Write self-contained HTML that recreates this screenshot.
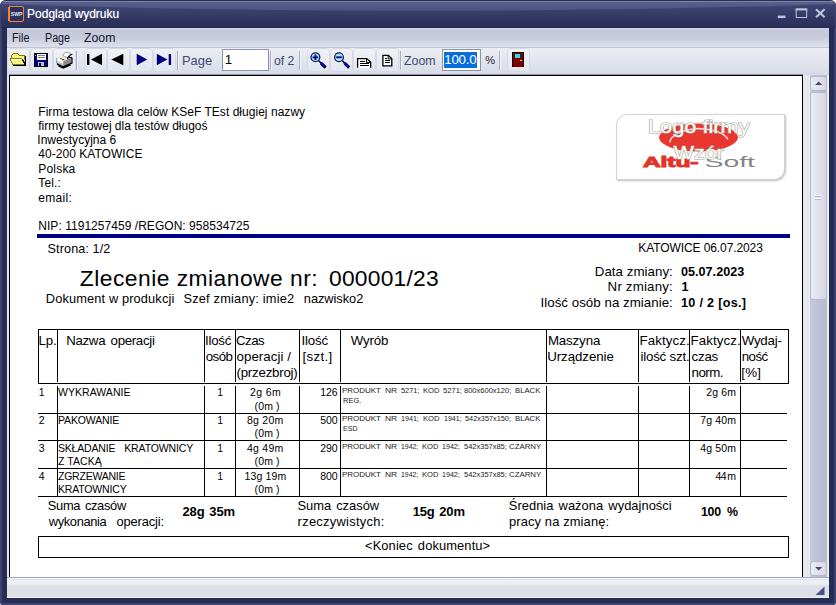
<!DOCTYPE html>
<html lang="pl"><head><meta charset="utf-8"><title>Podgląd wydruku</title>
<style>
html,body{margin:0;padding:0;background:#fff;}
body{width:836px;height:605px;position:relative;overflow:hidden;font-family:"Liberation Sans",sans-serif;}
.a{position:absolute;}
.t{position:absolute;white-space:pre;font-family:"Liberation Sans",sans-serif;}
#win{left:0;top:0;width:836px;height:605px;background:#262c53;border-radius:6px 6px 3px 3px;box-shadow:inset 0 0 0 2px #3c436f;}
#title{left:1px;top:0;width:834px;height:28px;border-radius:6px 6px 0 0;overflow:hidden;
 background:linear-gradient(#2a2f56 0px,#2a2f56 1px,#3d4471 1px,#3a416e 10px,#30355f 20px,#2b3058 27px,#242950 27px,#242950 28px);}
#menu{left:7px;top:28px;width:822px;height:20px;
 background:linear-gradient(#d8dbe7 0px,#c6c9da 2px,#c6c9da 9px,#dddfe9 18px,#dddfe9 19px,#c2c5d7 19px,#c2c5d7 20px);}
#tool{left:7px;top:48px;width:822px;height:27px;background:linear-gradient(#eceef2 0px,#d8dbe7 27px);}
.btn{position:absolute;top:49px;width:21px;height:22px;border-radius:4px;background:linear-gradient(#f1f2f6,#e4e6ee);box-shadow:0 0 0 1px #d6d9e6;}
.sep{position:absolute;top:51px;width:1px;height:19px;background:#a9adc6;box-shadow:1px 0 0 #f2f3f7;}
.inp{position:absolute;background:#fff;border:1px solid #8b93b6;box-sizing:border-box;}
#prev{left:7px;top:75px;width:822px;height:502px;background:#e7e9ef;}
#page{left:9px;top:75px;width:794px;height:502px;background:#fff;border:1px solid #000;border-bottom:none;box-sizing:border-box;}
#track{left:810px;top:75px;width:17px;height:502px;background:linear-gradient(90deg,#c6c9dc,#b6bad1);}
.sbtn{position:absolute;left:810px;width:17px;height:15px;border-radius:3px;background:linear-gradient(90deg,#eceef3,#d3d6e3);box-shadow:inset 0 0 0 1px #b4b8cf;}
#status{left:7px;top:577px;width:822px;height:21px;background:linear-gradient(#a3a7c2 0px,#a3a7c2 1px,#f8f8fb 1px,#f8f8fb 2px,#dfe1ee 2px,#dfe1ee 3px,#f0f1f6 3px,#eceef3 7px,#dfe1ea 9px,#dcdfe8 20px,#f0f1f5 20px,#f0f1f5 21px);}
.l{position:absolute;background:#000;}
</style></head><body>
<div id="win" class="a"></div>
<div id="title" class="a"><svg class="a" style="left:0;top:0" width="834" height="28" viewBox="1 0 834 28"><defs><linearGradient id="tg" x1="0" y1="0" x2="0" y2="1"><stop offset="0" stop-color="#5a628e"/><stop offset="1" stop-color="#4a5281"/></linearGradient></defs>
<path d="M0 1 H836 V4.3 Q418 17.4 0 4.3 Z" fill="url(#tg)"/><rect x="0" y="1" width="836" height="1" fill="#7c83a9"/></svg></div>
<!-- app icon -->
<svg class="a" style="left:8px;top:6px" width="16" height="16" viewBox="0 0 16 16"><rect x="0.5" y="0.5" width="15" height="15" rx="1.5" fill="#2c3260" stroke="#f58233" stroke-width="1"/><rect x="0" y="1" width="2" height="14" fill="#f58233"/><text x="8.6" y="10.3" text-anchor="middle" font-family="'Liberation Sans',sans-serif" font-weight="bold" font-size="4.6" fill="#e8e9f4" textLength="11.5" lengthAdjust="spacingAndGlyphs">SWP</text></svg>
<!-- caption buttons -->
<svg class="a" style="left:774px;top:5px" width="56" height="18" viewBox="0 0 56 18"><g fill="none" stroke="#bfc3dc">
<path d="M3.8 11.8 H11.4" stroke-width="2.5"/>
<rect x="22.2" y="4.2" width="10.5" height="8.3" stroke-width="1"/><path d="M21.7 4.4 H33.2" stroke-width="2"/>
<path d="M42 4.2 L50.6 12.3 M50.6 4.2 L42 12.3" stroke-width="2.1"/></g></svg>
<div id="menu" class="a"></div>
<div id="tool" class="a"></div>
<div class="btn" style="left:8px"></div><div class="btn" style="left:31px"></div><div class="btn" style="left:54px"></div>
<div class="sep" style="left:76px"></div>
<div class="btn" style="left:85px"></div><div class="btn" style="left:108px"></div><div class="btn" style="left:131px"></div><div class="btn" style="left:154px"></div>
<div class="sep" style="left:177px"></div>
<div class="inp" style="left:222px;top:49px;width:47px;height:22px"></div>
<div class="sep" style="left:270px"></div>
<div class="sep" style="left:299px"></div>
<div class="btn" style="left:308px"></div><div class="btn" style="left:331px"></div><div class="btn" style="left:354px"></div><div class="btn" style="left:377px"></div>
<div class="sep" style="left:400px"></div>
<div class="inp" style="left:442px;top:49px;width:39px;height:22px"></div>
<div class="a" style="left:444px;top:52px;width:33px;height:16px;background:#0a6ddd"></div>
<div class="sep" style="left:499px"></div>
<div class="btn" style="left:508px"></div>
<!-- folder -->
<svg class="a" style="left:10px;top:53px" width="16" height="13" viewBox="0 0 16 13" shape-rendering="crispEdges">
<rect x="3" y="0" width="5" height="1" fill="#808000"/>
<rect x="2" y="1" width="1" height="1" fill="#808000"/>
<rect x="3" y="1" width="5" height="1" fill="#ffff00"/>
<rect x="4" y="1" width="1" height="1" fill="#f4f4ff"/>
<rect x="6" y="1" width="1" height="1" fill="#f4f4ff"/>
<rect x="8" y="1" width="1" height="1" fill="#808000"/>
<rect x="1" y="2" width="1" height="1" fill="#808000"/>
<rect x="2" y="2" width="7" height="1" fill="#ffff00"/>
<rect x="3" y="2" width="1" height="1" fill="#f4f4ff"/>
<rect x="5" y="2" width="1" height="1" fill="#f4f4ff"/>
<rect x="7" y="2" width="1" height="1" fill="#f4f4ff"/>
<rect x="9" y="2" width="6" height="1" fill="#808000"/>
<rect x="1" y="3" width="1" height="1" fill="#808000"/>
<rect x="2" y="3" width="12" height="1" fill="#ffff00"/>
<rect x="2" y="3" width="1" height="1" fill="#f4f4ff"/>
<rect x="4" y="3" width="1" height="1" fill="#f4f4ff"/>
<rect x="6" y="3" width="1" height="1" fill="#f4f4ff"/>
<rect x="8" y="3" width="1" height="1" fill="#f4f4ff"/>
<rect x="10" y="3" width="1" height="1" fill="#f4f4ff"/>
<rect x="12" y="3" width="1" height="1" fill="#f4f4ff"/>
<rect x="14" y="3" width="1" height="1" fill="#808000"/>
<rect x="15" y="3" width="1" height="1" fill="#000"/>
<rect x="1" y="4" width="1" height="1" fill="#808000"/>
<rect x="2" y="4" width="12" height="1" fill="#ffff00"/>
<rect x="3" y="4" width="1" height="1" fill="#f4f4ff"/>
<rect x="5" y="4" width="1" height="1" fill="#f4f4ff"/>
<rect x="7" y="4" width="1" height="1" fill="#f4f4ff"/>
<rect x="9" y="4" width="1" height="1" fill="#f4f4ff"/>
<rect x="11" y="4" width="1" height="1" fill="#f4f4ff"/>
<rect x="13" y="4" width="1" height="1" fill="#f4f4ff"/>
<rect x="14" y="4" width="1" height="1" fill="#808000"/>
<rect x="15" y="4" width="1" height="1" fill="#000"/>
<rect x="0" y="5" width="12" height="1" fill="#808000"/>
<rect x="12" y="5" width="2" height="1" fill="#ffff00"/>
<rect x="12" y="5" width="1" height="1" fill="#f4f4ff"/>
<rect x="14" y="5" width="1" height="1" fill="#808000"/>
<rect x="15" y="5" width="1" height="1" fill="#000"/>
<rect x="0" y="6" width="1" height="1" fill="#808000"/>
<rect x="1" y="6" width="11" height="1" fill="#fff"/>
<rect x="12" y="6" width="1" height="1" fill="#000"/>
<rect x="13" y="6" width="1" height="1" fill="#ffff00"/>
<rect x="13" y="6" width="1" height="1" fill="#f4f4ff"/>
<rect x="14" y="6" width="1" height="1" fill="#808000"/>
<rect x="15" y="6" width="1" height="1" fill="#000"/>
<rect x="0" y="7" width="1" height="1" fill="#808000"/>
<rect x="1" y="7" width="11" height="1" fill="#ffff00"/>
<rect x="2" y="7" width="1" height="1" fill="#f4f4ff"/>
<rect x="4" y="7" width="1" height="1" fill="#f4f4ff"/>
<rect x="6" y="7" width="1" height="1" fill="#f4f4ff"/>
<rect x="8" y="7" width="1" height="1" fill="#f4f4ff"/>
<rect x="10" y="7" width="1" height="1" fill="#f4f4ff"/>
<rect x="12" y="7" width="2" height="1" fill="#000"/>
<rect x="14" y="7" width="1" height="1" fill="#ffff00"/>
<rect x="14" y="7" width="1" height="1" fill="#f4f4ff"/>
<rect x="15" y="7" width="1" height="1" fill="#000"/>
<rect x="1" y="8" width="1" height="1" fill="#808000"/>
<rect x="2" y="8" width="11" height="1" fill="#ffff00"/>
<rect x="3" y="8" width="1" height="1" fill="#f4f4ff"/>
<rect x="5" y="8" width="1" height="1" fill="#f4f4ff"/>
<rect x="7" y="8" width="1" height="1" fill="#f4f4ff"/>
<rect x="9" y="8" width="1" height="1" fill="#f4f4ff"/>
<rect x="11" y="8" width="1" height="1" fill="#f4f4ff"/>
<rect x="13" y="8" width="1" height="1" fill="#000"/>
<rect x="14" y="8" width="1" height="1" fill="#808000"/>
<rect x="15" y="8" width="1" height="1" fill="#000"/>
<rect x="1" y="9" width="1" height="1" fill="#808000"/>
<rect x="2" y="9" width="11" height="1" fill="#ffff00"/>
<rect x="2" y="9" width="1" height="1" fill="#f4f4ff"/>
<rect x="4" y="9" width="1" height="1" fill="#f4f4ff"/>
<rect x="6" y="9" width="1" height="1" fill="#f4f4ff"/>
<rect x="8" y="9" width="1" height="1" fill="#f4f4ff"/>
<rect x="10" y="9" width="1" height="1" fill="#f4f4ff"/>
<rect x="12" y="9" width="1" height="1" fill="#f4f4ff"/>
<rect x="13" y="9" width="3" height="1" fill="#000"/>
<rect x="2" y="10" width="1" height="1" fill="#808000"/>
<rect x="3" y="10" width="11" height="1" fill="#ffff00"/>
<rect x="3" y="10" width="1" height="1" fill="#f4f4ff"/>
<rect x="5" y="10" width="1" height="1" fill="#f4f4ff"/>
<rect x="7" y="10" width="1" height="1" fill="#f4f4ff"/>
<rect x="9" y="10" width="1" height="1" fill="#f4f4ff"/>
<rect x="11" y="10" width="1" height="1" fill="#f4f4ff"/>
<rect x="13" y="10" width="1" height="1" fill="#f4f4ff"/>
<rect x="14" y="10" width="2" height="1" fill="#000"/>
<rect x="2" y="11" width="12" height="1" fill="#808000"/>
<rect x="14" y="11" width="2" height="1" fill="#000"/>
<rect x="3" y="12" width="13" height="1" fill="#000"/>
</svg>
<!-- floppy -->
<svg class="a" style="left:34px;top:53px" width="14" height="14" viewBox="0 0 14 14" shape-rendering="crispEdges">
<rect width="14" height="14" fill="#000"/><rect x="1" y="1" width="12" height="12" fill="#000080"/>
<rect x="3" y="1" width="9" height="6" fill="#fff"/><rect x="4" y="2" width="7" height="1" fill="#808080"/><rect x="4" y="4" width="7" height="1" fill="#808080"/>
<rect x="4" y="9" width="6" height="4" fill="#c0c0c0"/><rect x="5" y="10" width="2" height="3" fill="#000080"/><rect x="1" y="2" width="1" height="1" fill="#c0c0c0"/>
</svg>
<!-- printer -->
<svg class="a" style="left:55px;top:51px" width="19" height="18" viewBox="55 51 19 18">
<path d="M56.6 58.3 L62.6 55.3 L67.6 57.6 L71.6 58 L71.6 63 L63.2 67 L56.6 63.6 Z" fill="#e9e9e9"/>
<path d="M63.2 61.2 L71.6 58 V63.2 L63.2 67 Z" fill="#8a8a8a"/>
<path d="M56.6 60.5 L63.2 63.4 V67 L56.6 63.6 Z" fill="#c4c4c4"/>
<path d="M56.6 58.3 L63.2 61.2 V63.4 L56.6 60.5 Z" fill="#fbfbfb"/>
<path d="M56.6 58.2 V63.4" stroke="#9a9a9a" stroke-width=".9" fill="none"/>
<path d="M62.7 55.6 L65 52.2 L68.3 52.4 L71.6 54.4 L67.6 57.9 Z" fill="#fff" stroke="#8c8c8c" stroke-width=".8"/>
<path d="M72.3 54.3 L70.6 54.7 L67.7 57.6 L67.9 59.4" fill="none" stroke="#000" stroke-width="1.2"/>
<path d="M68.6 57.4 L71.6 57.6 L72 58.5 V63.4" fill="none" stroke="#000" stroke-width="1.2"/>
<path d="M56.9 63.8 L63.2 66.9 L71.9 63.2 M58.2 65.6 L63.2 68 L70.6 64.8" fill="none" stroke="#000" stroke-width="1.3"/>
<rect x="59.8" y="58" width="2.4" height="1.3" rx=".5" fill="#00e000"/><rect x="62" y="59" width="2.4" height="1.3" rx=".5" fill="#ff0000"/>
</svg>
<!-- nav -->
<svg class="a" style="left:85px;top:50px" width="91" height="20" viewBox="85 50 91 20">
<rect x="87" y="54" width="2.4" height="11" fill="#000"/><path d="M91 59.5 L102 53.8 V65.2 Z" fill="#000"/>
<path d="M111.4 59.5 L123.3 53.8 V65.2 Z" fill="#000"/>
<path d="M136.7 53.8 L147.3 59.5 L136.7 65.2 Z" fill="#000080"/>
<path d="M156.8 53.8 L167.4 59.5 L156.8 65.2 Z" fill="#000080"/><rect x="168.7" y="54" width="2.4" height="11" fill="#000080"/>
</svg>
<!-- zoom in / out / pages -->
<svg class="a" style="left:308px;top:50px" width="92" height="20" viewBox="308 50 92 20">
<g><path d="M318.8 60.8 L321 63" stroke="#000" stroke-width="1.6"/><path d="M321.2 63.4 L325.6 67.6" stroke="#000" stroke-width="3"/><path d="M320.6 62.6 L324.8 66.6" stroke="#0000d8" stroke-width="2.4"/>
<circle cx="315.4" cy="57.3" r="4.4" fill="#9eeaf0" stroke="#151560" stroke-width="1.3"/></g>
<path d="M312.6 57.3 H318.2 M315.4 54.5 V60.1" stroke="#00008a" stroke-width="1.8"/>
<g transform="translate(23.6 0)"><path d="M318.8 60.8 L321 63" stroke="#000" stroke-width="1.6"/><path d="M321.2 63.4 L325.6 67.6" stroke="#000" stroke-width="3"/><path d="M320.6 62.6 L324.8 66.6" stroke="#0000d8" stroke-width="2.4"/>
<circle cx="315.4" cy="57.3" r="4.4" fill="#9eeaf0" stroke="#151560" stroke-width="1.3"/></g>
<path d="M336.2 57.3 H341.8" stroke="#00008a" stroke-width="1.8"/>
<path d="M357.6 67.8 V58.6 H366.8 L370.7 62.2 V67.8" fill="#fff" stroke="#000" stroke-width="1.3"/>
<path d="M366.5 58.8 V62.4 H370.5" fill="none" stroke="#000" stroke-width="1"/>
<path d="M360 61.5 H365 M360 63.5 H369 M360 65.5 H369" stroke="#000" stroke-width="1" shape-rendering="crispEdges"/>
<path d="M382.9 55.3 H388.4 L391.8 58.7 V65.8 H382.9 Z" fill="#fff" stroke="#000" stroke-width="1.3"/>
<path d="M388.2 55.5 V58.9 H391.6" fill="none" stroke="#000" stroke-width="1"/>
<path d="M385 58.5 H387 M385 60.5 H390 M385 62.5 H390" stroke="#000" stroke-width="1" shape-rendering="crispEdges"/>
</svg>
<!-- door -->
<svg class="a" style="left:511px;top:51px" width="14" height="17" viewBox="511 51 14 17" shape-rendering="crispEdges">
<rect x="511.7" y="51.8" width="11.8" height="15.5" fill="#000"/><rect x="512.7" y="52.8" width="9.8" height="13.8" fill="#800000"/>
<rect x="514.8" y="54.4" width="5.6" height="3.2" fill="#1ee6e6"/><rect x="520.3" y="59.7" width="1.3" height="1.3" fill="#ffd800"/>
</svg>

<div id="prev" class="a"></div>
<div class="a" style="left:9px;top:74px;width:794px;height:1px;background:#9093b0"></div>
<div id="page" class="a"></div>
<div id="track" class="a"></div>
<div class="sbtn" style="top:76px"></div>
<div class="sbtn" style="top:92px;height:208px"></div>
<div class="sbtn" style="top:561px"></div>
<svg class="a" style="left:810px;top:76px" width="17" height="15"><path d="M5.2 9 L8.7 5.6 L12.2 9 Z" fill="#3f4676"/></svg>
<svg class="a" style="left:810px;top:561px" width="17" height="15"><path d="M5.2 6 L8.7 9.4 L12.2 6 Z" fill="#3f4676"/></svg>
<svg class="a" style="left:814px;top:194px" width="8" height="6"><path d="M1 1.5H7M1 4.5H7" stroke="#f8f8fb" stroke-width="1"/><path d="M1 2.5H7M1 5.5H7" stroke="#a0a5c0" stroke-width="1" opacity=".6"/></svg>
<div class="a" style="left:827px;top:75px;width:2px;height:502px;background:#eef0f4"></div>
<div id="status" class="a"></div>
<svg class="a" style="left:814px;top:586px" width="12" height="10"><path d="M10.5 0.5 V9 H1.5 Z" fill="#4b5283"/></svg>

<!-- ============ document ============ -->
<div class="a" style="left:37px;top:234px;width:753px;height:4px;background:#000080"></div>
<div class="a" style="left:616px;top:114px;width:169px;height:66px;box-sizing:border-box;background:#fff;border:1px solid #d4d4d4;border-radius:11px 0 11px 0;box-shadow:1px 1px 2px rgba(0,0,0,.25)"></div>
<svg class="a" style="left:616px;top:114px" width="170" height="67" viewBox="616 114 170 67">
<ellipse cx="698.5" cy="137.5" rx="39.5" ry="14" fill="#e7372e"/>
<path d="M669.5 142.5 Q672 131 698 128.5 Q723 130 728 139.5" fill="none" stroke="#fde4e0" stroke-width="1.3"/>
<text x="643" y="167.2" font-family="'Liberation Sans',sans-serif" font-weight="bold" font-size="14" fill="#e0352c" stroke="#e0352c" stroke-width="1" textLength="55.5" lengthAdjust="spacingAndGlyphs">Altu-</text>
<text x="704.5" y="167.2" font-family="'Liberation Sans',sans-serif" font-size="14" fill="#848484" textLength="50.5" lengthAdjust="spacingAndGlyphs">Soft</text>
<g font-family="'Liberation Sans',sans-serif" font-size="19" fill="#fffdf0" stroke="#a3a8b0" stroke-width="1.2" paint-order="stroke">
<text x="648" y="133" textLength="101.5" lengthAdjust="spacingAndGlyphs">Logo firmy</text>
<text x="673.8" y="158.7" textLength="50" lengthAdjust="spacingAndGlyphs">Wzór</text></g>
</svg>

<div class="l" style="left:38px;top:329px;width:751px;height:1px"></div>
<div class="l" style="left:38px;top:383px;width:751px;height:1px"></div>
<div class="l" style="left:38px;top:329px;width:1px;height:55px"></div>
<div class="l" style="left:788px;top:329px;width:1px;height:55px"></div>
<div class="l" style="left:57px;top:329px;width:1px;height:53px"></div>
<div class="l" style="left:57px;top:386px;width:1px;height:111px"></div>
<div class="l" style="left:204px;top:329px;width:1px;height:53px"></div>
<div class="l" style="left:204px;top:386px;width:1px;height:111px"></div>
<div class="l" style="left:235px;top:329px;width:1px;height:53px"></div>
<div class="l" style="left:235px;top:386px;width:1px;height:111px"></div>
<div class="l" style="left:299px;top:329px;width:1px;height:53px"></div>
<div class="l" style="left:299px;top:386px;width:1px;height:111px"></div>
<div class="l" style="left:340px;top:329px;width:1px;height:53px"></div>
<div class="l" style="left:340px;top:386px;width:1px;height:111px"></div>
<div class="l" style="left:546px;top:329px;width:1px;height:53px"></div>
<div class="l" style="left:546px;top:386px;width:1px;height:111px"></div>
<div class="l" style="left:638px;top:329px;width:1px;height:53px"></div>
<div class="l" style="left:638px;top:386px;width:1px;height:111px"></div>
<div class="l" style="left:689px;top:329px;width:1px;height:53px"></div>
<div class="l" style="left:689px;top:386px;width:1px;height:111px"></div>
<div class="l" style="left:740px;top:329px;width:1px;height:53px"></div>
<div class="l" style="left:740px;top:386px;width:1px;height:111px"></div>
<div class="l" style="left:38px;top:413px;width:749px;height:1px"></div>
<div class="l" style="left:38px;top:440px;width:749px;height:1px"></div>
<div class="l" style="left:38px;top:468px;width:749px;height:1px"></div>
<div class="l" style="left:38px;top:496px;width:749px;height:1px"></div>
<div class="l" style="left:38px;top:536px;width:751px;height:1px"></div>
<div class="l" style="left:38px;top:557px;width:751px;height:1px"></div>
<div class="l" style="left:38px;top:536px;width:1px;height:22px"></div>
<div class="l" style="left:788px;top:536px;width:1px;height:22px"></div>
<span class="t" style="left:27.04px;top:7px;font-size:12.5px;line-height:14px;color:#fff;transform:scaleX(0.9617);transform-origin:0 0;text-shadow:0 0 1px rgba(255,255,255,.55);">Podgląd wydruku</span>
<span class="t" style="left:12.30px;top:31px;font-size:12px;line-height:14px;color:#14142e;transform:scaleX(0.9002);transform-origin:0 0;">File</span>
<span class="t" style="left:44.80px;top:31px;font-size:12px;line-height:14px;color:#14142e;transform:scaleX(0.8924);transform-origin:0 0;">Page</span>
<span class="t" style="left:84.10px;top:31px;font-size:12px;line-height:14px;color:#14142e;transform:scaleX(1.0235);transform-origin:0 0;">Zoom</span>
<span class="t" style="left:182.23px;top:53px;font-size:13.3px;line-height:15px;color:#3f4773;transform:scaleX(0.9710);transform-origin:0 0;">Page</span>
<span class="t" style="left:273.80px;top:53px;font-size:13.3px;line-height:15px;color:#3f4773;transform:scaleX(0.9181);transform-origin:0 0;">of 2</span>
<span class="t" style="left:403.80px;top:53px;font-size:13.3px;line-height:15px;color:#3f4773;transform:scaleX(0.9289);transform-origin:0 0;">Zoom</span>
<span class="t" style="left:485.20px;top:54px;font-size:11px;line-height:12px;color:#1b1b3a;">%</span>
<span class="t" style="left:224.70px;top:52px;font-size:13.3px;line-height:15px;color:#000;">1</span>
<span class="t" style="left:444.30px;top:52px;font-size:13.3px;line-height:15px;color:#fff;letter-spacing:-0.245px;">100.0</span>
<span class="t" style="left:38.30px;top:105px;font-size:12px;line-height:14px;color:#000;letter-spacing:0.034px;">Firma testowa dla celów KSeF TEst długiej nazwy</span>
<span class="t" style="left:38.30px;top:119px;font-size:12px;line-height:14px;color:#000;letter-spacing:-0.007px;">firmy testowej dla testów długoś</span>
<span class="t" style="left:37.30px;top:133px;font-size:12px;line-height:14px;color:#000;letter-spacing:0.021px;">Inwestycyjna 6</span>
<span class="t" style="left:38.30px;top:147px;font-size:12px;line-height:14px;color:#000;letter-spacing:0.036px;">40-200 KATOWICE</span>
<span class="t" style="left:38.30px;top:162px;font-size:12px;line-height:14px;color:#000;letter-spacing:0.191px;">Polska</span>
<span class="t" style="left:38.30px;top:176px;font-size:12px;line-height:14px;color:#000;letter-spacing:0.132px;">Tel.:</span>
<span class="t" style="left:38.30px;top:191px;font-size:12px;line-height:14px;color:#000;letter-spacing:0.325px;">email:</span>
<span class="t" style="left:38.30px;top:219px;font-size:12px;line-height:14px;color:#000;letter-spacing:0.039px;">NIP: 1191257459 /REGON: 958534725</span>
<span class="t" style="left:47.60px;top:242px;font-size:12.6px;line-height:14px;color:#000;letter-spacing:0.109px;">Strona: 1/2</span>
<span class="t" style="left:638.30px;top:241px;font-size:12px;line-height:14px;color:#000;letter-spacing:-0.095px;">KATOWICE 06.07.2023</span>
<span class="t" style="left:79.80px;top:265px;font-size:22.8px;line-height:26px;color:#000;letter-spacing:0.488px;">Zlecenie zmianowe nr:</span>
<span class="t" style="left:329.00px;top:265px;font-size:22.8px;line-height:26px;color:#000;letter-spacing:0.240px;">000001/23</span>
<span class="t" style="left:45.80px;top:291px;font-size:12.8px;line-height:15px;color:#000;letter-spacing:0.134px;">Dokument w produkcji</span>
<span class="t" style="left:183.50px;top:291px;font-size:12.8px;line-height:15px;color:#000;letter-spacing:0.190px;">Szef zmiany: imie2</span>
<span class="t" style="left:303.80px;top:291px;font-size:12.8px;line-height:15px;color:#000;letter-spacing:-0.029px;">nazwisko2</span>
<span class="t" style="left:594.80px;top:264px;font-size:13.3px;line-height:15px;color:#000;letter-spacing:0.036px;">Data zmiany:</span>
<span class="t" style="left:607.60px;top:279px;font-size:13.3px;line-height:15px;color:#000;letter-spacing:0.184px;">Nr zmiany:</span>
<span class="t" style="left:540.50px;top:295px;font-size:13.3px;line-height:15px;color:#000;letter-spacing:0.035px;">Ilość osób na zmianie:</span>
<span class="t" style="left:681.00px;top:265px;font-size:12.6px;line-height:14px;color:#000;font-weight:bold;letter-spacing:0.019px;">05.07.2023</span>
<span class="t" style="left:681.50px;top:280px;font-size:12.6px;line-height:14px;color:#000;font-weight:bold;">1</span>
<span class="t" style="left:681.00px;top:296px;font-size:12.6px;line-height:14px;color:#000;font-weight:bold;letter-spacing:0.309px;">10 / 2 [os.]</span>
<span class="t" style="left:38.50px;top:333px;font-size:13.3px;line-height:15px;color:#000;letter-spacing:-0.195px;">Lp.</span>
<span class="t" style="left:66.20px;top:333px;font-size:13.3px;line-height:15px;color:#000;letter-spacing:-0.327px;word-spacing:2px;">Nazwa operacji</span>
<span class="t" style="left:204.90px;top:333px;font-size:13.3px;line-height:15px;color:#000;letter-spacing:-0.198px;">Ilość</span>
<span class="t" style="left:205.70px;top:349px;font-size:13.3px;line-height:15px;color:#000;letter-spacing:-0.513px;">osób</span>
<span class="t" style="left:236.10px;top:333px;font-size:13.3px;line-height:15px;color:#000;letter-spacing:-0.582px;">Czas</span>
<span class="t" style="left:236.50px;top:349px;font-size:13.3px;line-height:15px;color:#000;letter-spacing:0.049px;">operacji /</span>
<span class="t" style="left:236.50px;top:365px;font-size:13.3px;line-height:15px;color:#000;letter-spacing:-0.232px;">(przezbroj)</span>
<span class="t" style="left:301.60px;top:333px;font-size:13.3px;line-height:15px;color:#000;letter-spacing:-0.223px;">Ilość</span>
<span class="t" style="left:302.50px;top:349px;font-size:13.3px;line-height:15px;color:#000;letter-spacing:0.304px;">[szt.]</span>
<span class="t" style="left:350.80px;top:333px;font-size:13.3px;line-height:15px;color:#000;letter-spacing:-0.176px;">Wyrób</span>
<span class="t" style="left:547.90px;top:333px;font-size:13.3px;line-height:15px;color:#000;letter-spacing:-0.135px;">Maszyna</span>
<span class="t" style="left:547.20px;top:349px;font-size:13.3px;line-height:15px;color:#000;letter-spacing:-0.062px;">Urządzenie</span>
<span class="t" style="left:639.50px;top:333px;font-size:13.3px;line-height:15px;color:#000;letter-spacing:0.085px;">Faktycz.</span>
<span class="t" style="left:640.50px;top:349px;font-size:13.3px;line-height:15px;color:#000;letter-spacing:-0.210px;">ilość szt.</span>
<span class="t" style="left:690.50px;top:333px;font-size:13.3px;line-height:15px;color:#000;letter-spacing:0.099px;">Faktycz.</span>
<span class="t" style="left:691.50px;top:349px;font-size:13.3px;line-height:15px;color:#000;letter-spacing:-0.197px;">czas</span>
<span class="t" style="left:691.50px;top:365px;font-size:13.3px;line-height:15px;color:#000;letter-spacing:-0.499px;">norm.</span>
<span class="t" style="left:741.70px;top:333px;font-size:13.3px;line-height:15px;color:#000;letter-spacing:-0.205px;">Wydaj-</span>
<span class="t" style="left:741.70px;top:349px;font-size:13.3px;line-height:15px;color:#000;letter-spacing:-0.513px;">ność</span>
<span class="t" style="left:741.30px;top:365px;font-size:13.3px;line-height:15px;color:#000;letter-spacing:0.241px;">[%]</span>
<span class="t" style="left:38.80px;top:386px;font-size:10.5px;line-height:12px;color:#000;">1</span>
<span class="t" style="left:217.20px;top:386px;font-size:10.5px;line-height:12px;color:#000;">1</span>
<span class="t" style="left:38.80px;top:414px;font-size:10.5px;line-height:12px;color:#000;">2</span>
<span class="t" style="left:217.20px;top:414px;font-size:10.5px;line-height:12px;color:#000;">1</span>
<span class="t" style="left:38.80px;top:442px;font-size:10.5px;line-height:12px;color:#000;">3</span>
<span class="t" style="left:217.20px;top:442px;font-size:10.5px;line-height:12px;color:#000;">1</span>
<span class="t" style="left:38.80px;top:470px;font-size:10.5px;line-height:12px;color:#000;">4</span>
<span class="t" style="left:217.20px;top:470px;font-size:10.5px;line-height:12px;color:#000;">1</span>
<span class="t" style="left:58.00px;top:386px;font-size:10.5px;line-height:12px;color:#000;letter-spacing:0.040px;">WYKRAWANIE</span>
<span class="t" style="left:58.00px;top:414px;font-size:10.5px;line-height:12px;color:#000;letter-spacing:-0.153px;">PAKOWANIE</span>
<span class="t" style="left:58.00px;top:442px;font-size:10.5px;line-height:12px;color:#000;letter-spacing:-0.192px;">SKŁADANIE</span>
<span class="t" style="left:124.20px;top:442px;font-size:10.5px;line-height:12px;color:#000;letter-spacing:-0.122px;">KRATOWNICY</span>
<span class="t" style="left:58.00px;top:455px;font-size:10.5px;line-height:12px;color:#000;letter-spacing:0.057px;">Z TACKĄ</span>
<span class="t" style="left:58.00px;top:470px;font-size:10.5px;line-height:12px;color:#000;letter-spacing:-0.234px;">ZGRZEWANIE</span>
<span class="t" style="left:58.00px;top:483px;font-size:10.5px;line-height:12px;color:#000;letter-spacing:-0.166px;">KRATOWNICY</span>
<span class="t" style="left:250.10px;top:386px;font-size:10.5px;line-height:12px;color:#000;letter-spacing:0.366px;">2g 6m</span>
<span class="t" style="left:247.00px;top:414px;font-size:10.5px;line-height:12px;color:#000;letter-spacing:0.245px;">8g 20m</span>
<span class="t" style="left:247.00px;top:442px;font-size:10.5px;line-height:12px;color:#000;letter-spacing:0.245px;">4g 49m</span>
<span class="t" style="left:244.60px;top:470px;font-size:10.5px;line-height:12px;color:#000;letter-spacing:0.131px;">13g 19m</span>
<span class="t" style="left:254.60px;top:400px;font-size:10.5px;line-height:12px;color:#000;letter-spacing:0.100px;">(0m )</span>
<span class="t" style="left:254.60px;top:427px;font-size:10.5px;line-height:12px;color:#000;letter-spacing:0.100px;">(0m )</span>
<span class="t" style="left:254.60px;top:455px;font-size:10.5px;line-height:12px;color:#000;letter-spacing:0.100px;">(0m )</span>
<span class="t" style="left:254.60px;top:483px;font-size:10.5px;line-height:12px;color:#000;letter-spacing:0.100px;">(0m )</span>
<span class="t" style="left:320.30px;top:386px;font-size:10.5px;line-height:12px;color:#000;letter-spacing:-0.140px;">126</span>
<span class="t" style="left:320.30px;top:414px;font-size:10.5px;line-height:12px;color:#000;letter-spacing:-0.140px;">500</span>
<span class="t" style="left:320.30px;top:442px;font-size:10.5px;line-height:12px;color:#000;letter-spacing:-0.140px;">290</span>
<span class="t" style="left:320.30px;top:470px;font-size:10.5px;line-height:12px;color:#000;letter-spacing:-0.140px;">800</span>
<span class="t" style="left:706.30px;top:386px;font-size:10.5px;line-height:12px;color:#000;letter-spacing:0.141px;">2g 6m</span>
<span class="t" style="left:700.20px;top:414px;font-size:10.5px;line-height:12px;color:#000;letter-spacing:0.165px;">7g 40m</span>
<span class="t" style="left:700.20px;top:442px;font-size:10.5px;line-height:12px;color:#000;letter-spacing:0.165px;">4g 50m</span>
<span class="t" style="left:715.40px;top:470px;font-size:10.5px;line-height:12px;color:#000;letter-spacing:-0.399px;word-spacing:-1.5px;">44 m</span>
<span class="t" style="left:341.80px;top:386px;font-size:7.8px;line-height:9px;color:#222;transform:scaleX(1.0220);transform-origin:0 0;">PRODUKT</span>
<span class="t" style="left:384.80px;top:386px;font-size:7.8px;line-height:9px;color:#222;transform:scaleX(1.0747);transform-origin:0 0;">NR</span>
<span class="t" style="left:400.60px;top:386px;font-size:7.8px;line-height:9px;color:#222;transform:scaleX(0.9511);transform-origin:0 0;">5271;</span>
<span class="t" style="left:422.80px;top:386px;font-size:7.8px;line-height:9px;color:#222;transform:scaleX(0.9789);transform-origin:0 0;">KOD</span>
<span class="t" style="left:442.80px;top:386px;font-size:7.8px;line-height:9px;color:#222;transform:scaleX(0.9718);transform-origin:0 0;">5271;</span>
<span class="t" style="left:464.40px;top:386px;font-size:7.8px;line-height:9px;color:#222;transform:scaleX(0.9647);transform-origin:0 0;">800x600x120;</span>
<span class="t" style="left:514.70px;top:386px;font-size:7.8px;line-height:9px;color:#222;transform:scaleX(0.9898);transform-origin:0 0;">BLACK</span>
<span class="t" style="left:341.80px;top:414px;font-size:7.8px;line-height:9px;color:#222;transform:scaleX(1.0220);transform-origin:0 0;">PRODUKT</span>
<span class="t" style="left:384.80px;top:414px;font-size:7.8px;line-height:9px;color:#222;transform:scaleX(1.0747);transform-origin:0 0;">NR</span>
<span class="t" style="left:401.30px;top:414px;font-size:7.8px;line-height:9px;color:#222;transform:scaleX(0.9150);transform-origin:0 0;">1941;</span>
<span class="t" style="left:422.80px;top:414px;font-size:7.8px;line-height:9px;color:#222;transform:scaleX(0.9789);transform-origin:0 0;">KOD</span>
<span class="t" style="left:443.70px;top:414px;font-size:7.8px;line-height:9px;color:#222;transform:scaleX(0.9046);transform-origin:0 0;">1941;</span>
<span class="t" style="left:465.10px;top:414px;font-size:7.8px;line-height:9px;color:#222;transform:scaleX(0.9381);transform-origin:0 0;">542x357x150;</span>
<span class="t" style="left:514.70px;top:414px;font-size:7.8px;line-height:9px;color:#222;transform:scaleX(0.9898);transform-origin:0 0;">BLACK</span>
<span class="t" style="left:341.80px;top:442px;font-size:7.8px;line-height:9px;color:#222;transform:scaleX(1.0220);transform-origin:0 0;">PRODUKT</span>
<span class="t" style="left:384.50px;top:442px;font-size:7.8px;line-height:9px;color:#222;transform:scaleX(1.0747);transform-origin:0 0;">NR</span>
<span class="t" style="left:401.30px;top:442px;font-size:7.8px;line-height:9px;color:#222;transform:scaleX(0.8839);transform-origin:0 0;">1942;</span>
<span class="t" style="left:421.60px;top:442px;font-size:7.8px;line-height:9px;color:#222;transform:scaleX(0.9789);transform-origin:0 0;">KOD</span>
<span class="t" style="left:442.40px;top:442px;font-size:7.8px;line-height:9px;color:#222;transform:scaleX(0.9098);transform-origin:0 0;">1942;</span>
<span class="t" style="left:463.80px;top:442px;font-size:7.8px;line-height:9px;color:#222;transform:scaleX(0.9598);transform-origin:0 0;">542x357x85;</span>
<span class="t" style="left:508.60px;top:442px;font-size:7.8px;line-height:9px;color:#222;transform:scaleX(1.0044);transform-origin:0 0;">CZARNY</span>
<span class="t" style="left:341.80px;top:470px;font-size:7.8px;line-height:9px;color:#222;transform:scaleX(1.0220);transform-origin:0 0;">PRODUKT</span>
<span class="t" style="left:384.50px;top:470px;font-size:7.8px;line-height:9px;color:#222;transform:scaleX(1.0747);transform-origin:0 0;">NR</span>
<span class="t" style="left:401.30px;top:470px;font-size:7.8px;line-height:9px;color:#222;transform:scaleX(0.8839);transform-origin:0 0;">1942;</span>
<span class="t" style="left:421.60px;top:470px;font-size:7.8px;line-height:9px;color:#222;transform:scaleX(0.9789);transform-origin:0 0;">KOD</span>
<span class="t" style="left:442.40px;top:470px;font-size:7.8px;line-height:9px;color:#222;transform:scaleX(0.9098);transform-origin:0 0;">1942;</span>
<span class="t" style="left:463.80px;top:470px;font-size:7.8px;line-height:9px;color:#222;transform:scaleX(0.9598);transform-origin:0 0;">542x357x85;</span>
<span class="t" style="left:508.60px;top:470px;font-size:7.8px;line-height:9px;color:#222;transform:scaleX(1.0044);transform-origin:0 0;">CZARNY</span>
<span class="t" style="left:342.50px;top:396px;font-size:7.8px;line-height:9px;color:#222;transform:scaleX(0.9632);transform-origin:0 0;">REG.</span>
<span class="t" style="left:342.50px;top:424px;font-size:7.8px;line-height:9px;color:#222;transform:scaleX(0.9085);transform-origin:0 0;">ESD</span>
<span class="t" style="left:47.80px;top:498px;font-size:12.9px;line-height:15px;color:#000;letter-spacing:-0.333px;word-spacing:1.5px;">Suma czasów</span>
<span class="t" style="left:48.80px;top:514px;font-size:12.9px;line-height:15px;color:#000;letter-spacing:-0.380px;">wykonania</span>
<span class="t" style="left:116.60px;top:514px;font-size:12.9px;line-height:15px;color:#000;letter-spacing:-0.168px;">operacji:</span>
<span class="t" style="left:182.50px;top:504px;font-size:13px;line-height:15px;color:#000;font-weight:bold;letter-spacing:-0.162px;word-spacing:1.5px;">28g 35m</span>
<span class="t" style="left:297.40px;top:498px;font-size:12.9px;line-height:15px;color:#000;word-spacing:1.5px;">Suma czasów</span>
<span class="t" style="left:297.60px;top:514px;font-size:12.9px;line-height:15px;color:#000;letter-spacing:0.277px;">rzeczywistych:</span>
<span class="t" style="left:412.70px;top:504px;font-size:13px;line-height:15px;color:#000;font-weight:bold;letter-spacing:-0.212px;word-spacing:1.5px;">15g 20m</span>
<span class="t" style="left:508.80px;top:498px;font-size:12.9px;line-height:15px;color:#000;letter-spacing:0.033px;word-spacing:1.5px;">Średnia ważona wydajności</span>
<span class="t" style="left:509.00px;top:514px;font-size:12.9px;line-height:15px;color:#000;letter-spacing:0.128px;">pracy na zmianę:</span>
<span class="t" style="left:701.00px;top:505px;font-size:12.4px;line-height:14px;color:#000;font-weight:bold;letter-spacing:-0.279px;word-spacing:3px;">100 %</span>
<span class="t" style="left:365.00px;top:538px;font-size:12.9px;line-height:15px;color:#000;letter-spacing:0.106px;word-spacing:1.5px;">&lt;Koniec dokumentu&gt;</span>
</body></html>
